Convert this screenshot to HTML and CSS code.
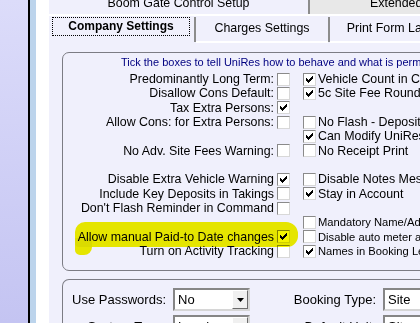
FILE: index.html
```html
<!DOCTYPE html>
<html>
<head>
<meta charset="utf-8">
<link rel="stylesheet" href="styles.css">
</head>
<body>
<div class="app">
  <div class="sidebar"></div>
  <div class="rule"></div>
  <div class="strip"></div>
  <div class="gutter"></div>
  <div class="main">
    <div class="tabs-top">
      <div class="ttab boom"><div class="ttext">Boom Gate Control Setup</div></div>
      <div class="tsep-top"></div>
      <div class="ttab ext"><div class="ttext">Extended Settings</div></div>
    </div>
    <div class="tabs-sub">
      <div class="stab active"><span class="focus">Company Settings</span></div>
      <div class="tsep"></div>
      <div class="stab charges">Charges Settings</div>
      <div class="tsep"></div>
      <div class="stab print">Print Form Layout</div>
    </div>
    <div class="panel">
      <div class="group group-opts">
        <div class="hdr">Tick the boxes to tell UniRes how to behave and what is permitted for this company</div>
        <div class="opts">
          <span class="l">Predominantly Long Term:</span><span class="cb"></span><span></span><span class="cb on"><svg viewBox="0 0 11 11" width="11" height="11"><path d="M8 2h1v1h-1zM7 3h2v1h-2zM2 4h1v1h-1zM6 4h3v1h-3zM2 5h2v1h-2zM5 5h3v1h-3zM2 6h5v1h-5zM3 7h3v1h-3zM4 8h1v1h-1z"/></svg></span><span class="r">Vehicle Count in Check In</span>

          <span class="l">Disallow Cons Default:</span><span class="cb"></span><span></span><span class="cb on"><svg viewBox="0 0 11 11" width="11" height="11"><path d="M8 2h1v1h-1zM7 3h2v1h-2zM2 4h1v1h-1zM6 4h3v1h-3zM2 5h2v1h-2zM5 5h3v1h-3zM2 6h5v1h-5zM3 7h3v1h-3zM4 8h1v1h-1z"/></svg></span><span class="r">5c Site Fee Rounding</span>

          <span class="l">Tax Extra Persons:</span><span class="cb on"><svg viewBox="0 0 11 11" width="11" height="11"><path d="M8 2h1v1h-1zM7 3h2v1h-2zM2 4h1v1h-1zM6 4h3v1h-3zM2 5h2v1h-2zM5 5h3v1h-3zM2 6h5v1h-5zM3 7h3v1h-3zM4 8h1v1h-1z"/></svg></span><span></span><span></span><span></span>

          <span class="l">Allow Cons: for Extra Persons:</span><span class="cb"></span><span></span><span class="cb"></span><span class="r">No Flash - Deposit Due</span>

          <span></span><span></span><span></span><span class="cb on"><svg viewBox="0 0 11 11" width="11" height="11"><path d="M8 2h1v1h-1zM7 3h2v1h-2zM2 4h1v1h-1zM6 4h3v1h-3zM2 5h2v1h-2zM5 5h3v1h-3zM2 6h5v1h-5zM3 7h3v1h-3zM4 8h1v1h-1z"/></svg></span><span class="r">Can Modify UniRes Fees</span>

          <span class="l">No Adv. Site Fees Warning:</span><span class="cb"></span><span></span><span class="cb"></span><span class="r">No Receipt Print</span>

          <span></span><span></span><span></span><span></span><span></span>

          <span class="l">Disable Extra Vehicle Warning</span><span class="cb on"><svg viewBox="0 0 11 11" width="11" height="11"><path d="M8 2h1v1h-1zM7 3h2v1h-2zM2 4h1v1h-1zM6 4h3v1h-3zM2 5h2v1h-2zM5 5h3v1h-3zM2 6h5v1h-5zM3 7h3v1h-3zM4 8h1v1h-1z"/></svg></span><span></span><span class="cb"></span><span class="r">Disable Notes Message</span>

          <span class="l">Include Key Deposits in Takings</span><span class="cb"></span><span></span><span class="cb on"><svg viewBox="0 0 11 11" width="11" height="11"><path d="M8 2h1v1h-1zM7 3h2v1h-2zM2 4h1v1h-1zM6 4h3v1h-3zM2 5h2v1h-2zM5 5h3v1h-3zM2 6h5v1h-5zM3 7h3v1h-3zM4 8h1v1h-1z"/></svg></span><span class="r">Stay in Account</span>

          <span class="l">Don't Flash Reminder in Command</span><span class="cb"></span><span></span><span></span><span></span>

          <span></span><span></span><span></span><span class="cb"></span><span class="r small">Mandatory Name/Address</span>

          <span class="l">Allow manual Paid-to Date changes</span><span class="cb on"><svg viewBox="0 0 11 11" width="11" height="11"><path d="M8 2h1v1h-1zM7 3h2v1h-2zM2 4h1v1h-1zM6 4h3v1h-3zM2 5h2v1h-2zM5 5h3v1h-3zM2 6h5v1h-5zM3 7h3v1h-3zM4 8h1v1h-1z"/></svg></span><span></span><span class="cb"></span><span class="r small">Disable auto meter assign</span>

          <span class="l">Turn on Activity Tracking</span><span class="cb"></span><span></span><span class="cb on"><svg viewBox="0 0 11 11" width="11" height="11"><path d="M8 2h1v1h-1zM7 3h2v1h-2zM2 4h1v1h-1zM6 4h3v1h-3zM2 5h2v1h-2zM5 5h3v1h-3zM2 6h5v1h-5zM3 7h3v1h-3zM4 8h1v1h-1z"/></svg></span><span class="r small">Names in Booking Ledger</span>
        </div>
        <div class="hl hl-main"></div>
        <div class="hl hl-tail"></div>
      </div>
      <div class="group group-sys">
        <div class="sys">
          <span class="sl">Use Passwords:</span>
          <div class="sel">No<span class="dd"><svg viewBox="0 0 7 4" width="7" height="4"><path d="M0 0h7L3.5 4z"/></svg></span></div>
          <span class="sl">Booking Type:</span>
          <div class="sel wide">Site</div>
          <span class="sl">System Type:</span>
          <div class="sel">Local<span class="dd"><svg viewBox="0 0 7 4" width="7" height="4"><path d="M0 0h7L3.5 4z"/></svg></span></div>
          <span class="sl">Default Unit:</span>
          <div class="sel wide">Site</div>
        </div>
      </div>
    </div>
  </div>
</div>
</body>
</html>
```

FILE: styles.css
```css
* { box-sizing: border-box; }
html, body { margin: 0; padding: 0; }
body {
  width: 420px;
  height: 323px;
  overflow: hidden;
  background: #fff;
  color: #000;
  font-family: "Liberation Sans", Arial, sans-serif;
  font-size: 12.4px;
}
.app { display: flex; height: 323px; }
.sidebar { width: 28px; flex-shrink: 0; background: linear-gradient(#dcdcfa, #c4c4f2); }
.rule { width: 2px; flex-shrink: 0; background: #000; }
.strip { width: 6px; flex-shrink: 0; background: #bcd4ec; }
.gutter { width: 13px; flex-shrink: 0; background: #fff; }
.main { flex: 1; min-width: 0; background: #f0f0fc; overflow: hidden; }

/* top tab row (scrolled partly out) */
.tabs-top { display: flex; height: 14px; overflow: hidden; }
.ttab { white-space: nowrap; flex-shrink: 0; }
.ttext { margin-top: -4px; line-height: 14px; }
.boom { width: 259px; text-align: center; }
.tsep-top { width: 2px; flex-shrink: 0; background: #8c8c8c; }
.ext { width: 200px; background: #e8e8e8; padding-left: 60px; }

/* sub tabs */
.tabs-sub { display: flex; height: 29px; border-top: 2px solid #fff; overflow: hidden; }
.stab {
  flex-shrink: 0;
  height: 27px;
  border-bottom: 2px solid #fff;
  white-space: nowrap;
  text-align: center;
  line-height: 24px;
}
.stab.active { width: 145px; border-bottom-color: transparent; padding: 1px 4px 0 3px; }
.focus {
  display: block;
  height: 19px;
  border: 1px dotted #000;
  line-height: 17px;
  font-weight: bold;
  font-size: 12px;
}
.tsep { width: 2px; flex-shrink: 0; height: 25px; background: #8c8c8c; margin-top: 1px; }
.charges { width: 132px; }
.print { width: 132px; }

/* panel & groups */
.panel { padding: 9px 0 0 13px; }
.group {
  position: relative;
  width: 400px;
  border: 1px solid #7c7c84;
  border-radius: 7px;
}
.group-opts { height: 219px; padding-top: 3px; }
.hdr {
  font-size: 11px;
  line-height: 13px;
  color: #000080;
  padding-left: 58px;
  white-space: nowrap;
}
.opts {
  display: grid;
  grid-template-columns: 214px 13px 13px 13px 1fr;
  grid-auto-rows: 14.33px;
  align-items: center;
  margin-top: 3px;
}
.l { text-align: right; padding-right: 3px; white-space: nowrap; line-height: 14px; }
.r { padding-left: 2px; white-space: nowrap; line-height: 14px; }
.small { font-size: 11.2px; }
.cb {
  display: block;
  width: 13px;
  height: 13px;
  background: #fff;
  border: 1px solid;
  border-color: #8a8a8a #d8d8d8 #d8d8d8 #8a8a8a;
}
.cb svg { display: block; fill: #000; shape-rendering: crispEdges; }

.hl { position: absolute; background: #f4f400; mix-blend-mode: multiply; }
.hl-main { left: 12px; top: 169px; width: 223px; height: 25px; border-radius: 10px 12px 11px 4px; }
.hl-tail { left: 12px; top: 185px; width: 17px; height: 17px; border-radius: 0 0 8px 5px; }

.group-sys { height: 80px; margin-top: 8px; padding-top: 8px; border-bottom: 0; }
.sys {
  display: grid;
  grid-template-columns: 103px 77px 119px 110px;
  grid-auto-rows: 23px;
  column-gap: 7px;
  row-gap: 4px;
  align-items: center;
}
.sl { text-align: right; font-size: 13px; white-space: nowrap; }
.sel {
  display: flex;
  align-items: center;
  height: 23px;
  padding-left: 3px;
  background: #fff;
  border: 2px solid;
  border-color: #868686 #d6d6d6 #d6d6d6 #868686;
  font-size: 13px;
  white-space: nowrap;
}
.dd {
  margin-left: auto;
  width: 16px;
  height: 19px;
  display: flex;
  align-items: center;
  justify-content: center;
  background: #f0f0f0;
  border: 1px solid;
  border-color: #fff #6c6c6c #6c6c6c #fff;
}
.dd svg { display: block; fill: #000; }
```
